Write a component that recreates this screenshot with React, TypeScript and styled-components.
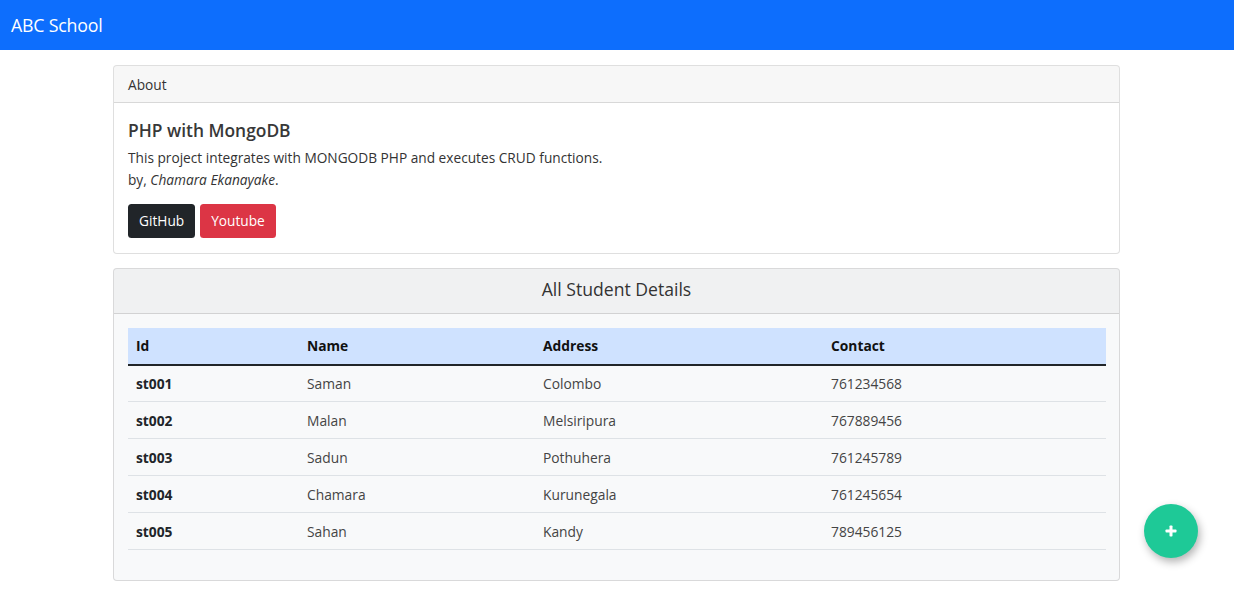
import React from "react";
import styled, { createGlobalStyle } from "styled-components";

const Global = createGlobalStyle`
  * { box-sizing: border-box; }
  html, body { margin: 0; padding: 0; background: #fff; }
  body {
    font-family: "Open Sans", "Noto Sans", "Liberation Sans", sans-serif;
    font-size: 13.7px;
    color: #212529;
  }
`;

const NavBar = styled.nav`
  height: 50px;
  background: #0d6efd;
  display: flex;
  align-items: center;
  padding: 0 11px;
`;

const Brand = styled.a`
  color: #fff;
  font-size: 17.8px;
  text-decoration: none;
  letter-spacing: -0.2px;
`;

const Main = styled.main`
  width: 1007px;
  margin: 15px 0 0 113px;
  display: flex;
  flex-direction: column;
  gap: 14px;
`;

const Card = styled.section<{ $light?: boolean }>`
  border: 1px solid rgba(0, 0, 0, 0.125);
  border-radius: 4px;
  background: ${(p) => (p.$light ? "#f8f9fa" : "#fff")};
  overflow: hidden;
`;

const CardHeader = styled.header<{ $center?: boolean; $tall?: boolean }>`
  height: ${(p) => (p.$tall ? "45px" : "37px")};
  display: flex;
  align-items: center;
  justify-content: ${(p) => (p.$center ? "center" : "flex-start")};
  padding: 0 14px ${(p) => (p.$tall ? "3px" : "0")};
  background: rgba(0, 0, 0, 0.03);
  border-bottom: 1px solid rgba(0, 0, 0, 0.125);
  font-size: ${(p) => (p.$tall ? "17.6px" : "13.7px")};
  color: #333;
`;

const CardBody = styled.div<{ $bottom?: number }>`
  padding: 14px 14px ${(p) => p.$bottom ?? 14}px;
`;

const Title = styled.h5`
  margin: 2px 0 5px;
  font-size: 17.4px;
  font-weight: 600;
  line-height: 1.3;
  color: #383838;
`;

const Text = styled.p`
  margin: 0 0 13px;
  line-height: 22px;
  color: #333;
`;

const Buttons = styled.div`
  display: flex;
  gap: 5px;
`;

const Button = styled.a<{ $variant: "dark" | "danger" }>`
  display: inline-flex;
  align-items: center;
  justify-content: center;
  height: 34px;
  padding: 0 11px;
  border-radius: 3.5px;
  color: #fff;
  font-size: 13.7px;
  text-decoration: none;
  background: ${(p) => (p.$variant === "dark" ? "#212529" : "#dc3545")};
`;

const Table = styled.table`
  width: 100%;
  border-collapse: collapse;
  table-layout: fixed;
  font-size: 13.8px;
`;

const HeadCell = styled.th<{ $w: number }>`
  width: ${(p) => p.$w}px;
  text-align: left;
  height: 37px;
  padding: 0 8px;
  font-weight: 700;
  background: #cfe2ff;
  color: #111;
  border-bottom: 2px solid #212529;
`;

const Cell = styled.td<{ $bold?: boolean }>`
  height: 37px;
  padding: 0 8px;
  font-weight: ${(p) => (p.$bold ? 700 : 400)};
  color: ${(p) => (p.$bold ? "#212529" : "#444")};
  border-bottom: 1px solid #dee2e6;
`;

const Fab = styled.button`
  position: fixed;
  left: 1144px;
  top: 504px;
  width: 54px;
  height: 54px;
  border-radius: 50%;
  border: none;
  background: #1ec997;
  box-shadow: 2px 4px 8px rgba(0, 0, 0, 0.3);
  display: flex;
  align-items: center;
  justify-content: center;
  padding: 0;
`;

const students = [
  ["st001", "Saman", "Colombo", "761234568"],
  ["st002", "Malan", "Melsiripura", "767889456"],
  ["st003", "Sadun", "Pothuhera", "761245789"],
  ["st004", "Chamara", "Kurunegala", "761245654"],
  ["st005", "Sahan", "Kandy", "789456125"],
];

const cols: [string, number][] = [
  ["Id", 171],
  ["Name", 236],
  ["Address", 288],
  ["Contact", 283],
];

export default function App() {
  return (
    <>
      <Global />
      <NavBar>
        <Brand href="#">ABC School</Brand>
      </NavBar>
      <Main>
        <Card>
          <CardHeader>About</CardHeader>
          <CardBody $bottom={15}>
            <Title>PHP with MongoDB</Title>
            <Text>
              This project integrates with MONGODB PHP and executes CRUD functions.
              <br />
              by, <i>Chamara Ekanayake</i>.
            </Text>
            <Buttons>
              <Button $variant="dark" href="#">GitHub</Button>
              <Button $variant="danger" href="#">Youtube</Button>
            </Buttons>
          </CardBody>
        </Card>
        <Card $light>
          <CardHeader $center $tall>All Student Details</CardHeader>
          <CardBody $bottom={30}>
            <Table>
              <thead>
                <tr>
                  {cols.map(([c, w]) => (
                    <HeadCell key={c} $w={w}>{c}</HeadCell>
                  ))}
                </tr>
              </thead>
              <tbody>
                {students.map((s) => (
                  <tr key={s[0]}>
                    <Cell $bold>{s[0]}</Cell>
                    <Cell>{s[1]}</Cell>
                    <Cell>{s[2]}</Cell>
                    <Cell>{s[3]}</Cell>
                  </tr>
                ))}
              </tbody>
            </Table>
          </CardBody>
        </Card>
      </Main>
      <Fab aria-label="Add">
        <svg width="12" height="12" viewBox="0 0 12 12">
          <rect x="4.5" y="0.5" width="3" height="11" rx="0.8" fill="#fff" />
          <rect x="0.5" y="4.5" width="11" height="3" rx="0.8" fill="#fff" />
        </svg>
      </Fab>
    </>
  );
}
